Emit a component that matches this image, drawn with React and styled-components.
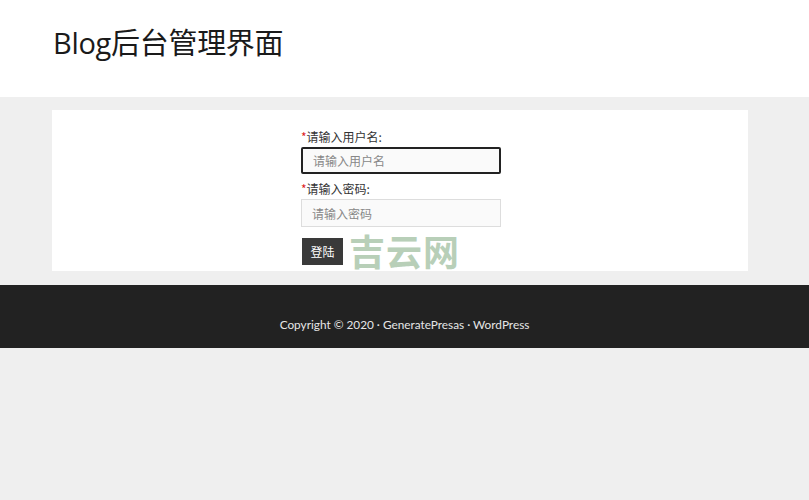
import React from "react";
import styled, { createGlobalStyle } from "styled-components";

const GlobalStyle = createGlobalStyle`
  html, body {
    margin: 0;
    padding: 0;
    background: #efefef;
    font-family: "Open Sans", "Noto Sans CJK SC", sans-serif;
  }
`;

const Header = styled.header`
  background: #fff;
  height: 97px;
  padding: 0 53px;
  display: flex;
  align-items: center;
`;

const Title = styled.h1`
  margin: 0 0 16px;
  font-size: 29px;
  font-weight: 400;
  color: #1a1a1a;
  font-family: "Open Sans", "Noto Sans CJK SC", sans-serif;
  letter-spacing: -0.3px;
`;

const Main = styled.main`
  padding: 13px 61px 14px 52px;
`;

const Card = styled.div`
  background: #fff;
  height: 161px;
  display: flex;
  justify-content: center;
  padding: 20px 0 0 2px;
  box-sizing: border-box;
`;

const Form = styled.form`
  width: 200px;
  display: flex;
  flex-direction: column;
  position: relative;
`;

const Label = styled.label`
  font-size: 12px;
  color: #333;
  line-height: 14px;
  margin-bottom: 3px;
  font-family: "Noto Sans CJK SC", sans-serif;
`;

const Star = styled.span`
  color: #d22;
`;

const Input = styled.input`
  box-sizing: border-box;
  width: 200px;
  height: ${p => (p.$focus ? "27px" : "28px")};
  border: ${p => (p.$focus ? "2px solid #222" : "1px solid #ddd")};
  border-radius: ${p => (p.$focus ? "2px" : "0")};
  background: #fafafa;
  padding: 0 10px;
  font-size: 12px;
  color: #666;
  margin-bottom: 8px;
  font-family: "Noto Sans CJK SC", sans-serif;
  outline: none;
  &::placeholder {
    color: #888;
  }
`;

const Button = styled.button`
  width: 41px;
  height: 27px;
  margin-top: 3px;
  margin-left: 1px;
  background: #3a3a3a;
  color: #fff;
  border: none;
  font-size: 12px;
  font-family: "Noto Sans CJK SC", sans-serif;
  padding: 0;
  display: block;
`;

const Watermark = styled.span`
  position: absolute;
  left: 48px;
  bottom: 1px;
  font-size: 36px;
  line-height: 40px;
  font-weight: 700;
  color: #b8cfb8;
  letter-spacing: 1px;
  font-family: "Noto Sans CJK SC", sans-serif;
  pointer-events: none;
`;

const Footer = styled.footer`
  background: #222;
  height: 63px;
  box-sizing: border-box;
  padding-top: 15px;
  display: flex;
  align-items: center;
  justify-content: center;
  color: #e6e6e6;
  font-size: 11.8px;
  font-family: "Lato", sans-serif;
`;

export default function App() {
  return (
    <>
      <GlobalStyle />
      <Header>
        <Title>Blog后台管理界面</Title>
      </Header>
      <Main>
        <Card>
          <Form onSubmit={e => e.preventDefault()}>
            <Label>
              <Star>*</Star>请输入用户名:
            </Label>
            <Input $focus placeholder="请输入用户名" />
            <Label>
              <Star>*</Star>请输入密码:
            </Label>
            <Input type="password" placeholder="请输入密码" />
            <Button type="submit">登陆</Button>
            <Watermark>吉云网</Watermark>
          </Form>
        </Card>
      </Main>
      <Footer>Copyright © 2020 · GeneratePresas · WordPress</Footer>
    </>
  );
}
